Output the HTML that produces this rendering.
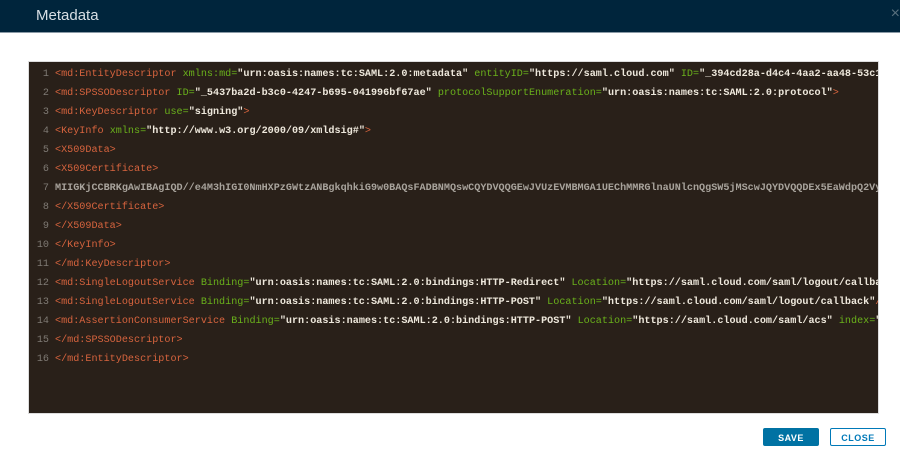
<!DOCTYPE html>
<html><head><meta charset="utf-8"><style>
body{margin:0;width:900px;height:451px;background:#fff;overflow:hidden;font-family:"Liberation Sans",sans-serif;position:relative}
.hdr{position:absolute;left:0;top:0;width:900px;height:32px;background:#00253c;border-bottom:1px solid #8a9aa6}
.hdr span{position:absolute;left:36px;top:7px;color:#d8dfe5;font-size:15px}
.x{position:absolute;right:0;top:5px;color:#58707e;font-size:16px}
.code{position:absolute;left:28px;top:61px;width:851px;height:353px;background:#292019;overflow:hidden;border:1px solid #ddd;box-sizing:border-box}
.l{position:absolute;left:0;height:19px;line-height:19px;font-family:"Liberation Mono",monospace;font-size:10.15px;white-space:pre;color:#ebe6da}
.v{font-weight:bold;color:#eee8dc}
.n{display:inline-block;width:20px;text-align:right;color:#7f7a74;margin-right:6px}
.t{color:#d8643e}.a{color:#6ab11b}.g{color:#a8a39c;font-weight:bold}
.btn{position:absolute;top:428px;height:18px;width:56px;font-size:9px;font-weight:bold;text-align:center;line-height:18px;letter-spacing:.5px;border-radius:2px;box-sizing:border-box}
</style></head><body>
<div class="hdr"><span>Metadata</span></div><div class="x">×</div>
<div class="code">
<div class="l" style="top:3px"><span class="n">1</span><span class="t">&lt;md:EntityDescriptor</span> <span class="a">xmlns:md=</span><span class="v">"urn:oasis:names:tc:SAML:2.0:metadata"</span> <span class="a">entityID=</span><span class="v">"https://saml.cloud.com"</span> <span class="a">ID=</span><span class="v">"_394cd28a-d4c4-4aa2-aa48-53c1234567</span></div>
<div class="l" style="top:22px"><span class="n">2</span><span class="t">&lt;md:SPSSODescriptor</span> <span class="a">ID=</span><span class="v">"_5437ba2d-b3c0-4247-b695-041996bf67ae"</span> <span class="a">protocolSupportEnumeration=</span><span class="v">"urn:oasis:names:tc:SAML:2.0:protocol"</span><span class="t">&gt;</span></div>
<div class="l" style="top:41px"><span class="n">3</span><span class="t">&lt;md:KeyDescriptor</span> <span class="a">use=</span><span class="v">"signing"</span><span class="t">&gt;</span></div>
<div class="l" style="top:60px"><span class="n">4</span><span class="t">&lt;KeyInfo</span> <span class="a">xmlns=</span><span class="v">"http://www.w3.org/2000/09/xmldsig#"</span><span class="t">&gt;</span></div>
<div class="l" style="top:79px"><span class="n">5</span><span class="t">&lt;X509Data&gt;</span></div>
<div class="l" style="top:98px"><span class="n">6</span><span class="t">&lt;X509Certificate&gt;</span></div>
<div class="l" style="top:117px"><span class="n">7</span><span class="g">MIIGKjCCBRKgAwIBAgIQD//e4M3hIGI0NmHXPzGWtzANBgkqhkiG9w0BAQsFADBNMQswCQYDVQQGEwJVUzEVMBMGA1UEChMMRGlnaUNlcnQgSW5jMScwJQYDVQQDEx5EaWdpQ2VydCBTSEEy</span></div>
<div class="l" style="top:136px"><span class="n">8</span><span class="t">&lt;/X509Certificate&gt;</span></div>
<div class="l" style="top:155px"><span class="n">9</span><span class="t">&lt;/X509Data&gt;</span></div>
<div class="l" style="top:174px"><span class="n">10</span><span class="t">&lt;/KeyInfo&gt;</span></div>
<div class="l" style="top:193px"><span class="n">11</span><span class="t">&lt;/md:KeyDescriptor&gt;</span></div>
<div class="l" style="top:212px"><span class="n">12</span><span class="t">&lt;md:SingleLogoutService</span> <span class="a">Binding=</span><span class="v">"urn:oasis:names:tc:SAML:2.0:bindings:HTTP-Redirect"</span> <span class="a">Location=</span><span class="v">"https://saml.cloud.com/saml/logout/callback"</span><span class="t">/&gt;</span></div>
<div class="l" style="top:231px"><span class="n">13</span><span class="t">&lt;md:SingleLogoutService</span> <span class="a">Binding=</span><span class="v">"urn:oasis:names:tc:SAML:2.0:bindings:HTTP-POST"</span> <span class="a">Location=</span><span class="v">"https://saml.cloud.com/saml/logout/callback"</span><span class="t">/&gt;</span></div>
<div class="l" style="top:250px"><span class="n">14</span><span class="t">&lt;md:AssertionConsumerService</span> <span class="a">Binding=</span><span class="v">"urn:oasis:names:tc:SAML:2.0:bindings:HTTP-POST"</span> <span class="a">Location=</span><span class="v">"https://saml.cloud.com/saml/acs"</span> <span class="a">index=</span><span class="v">"0"</span></div>
<div class="l" style="top:269px"><span class="n">15</span><span class="t">&lt;/md:SPSSODescriptor&gt;</span></div>
<div class="l" style="top:288px"><span class="n">16</span><span class="t">&lt;/md:EntityDescriptor&gt;</span></div>
</div>
<div class="btn" style="left:763px;background:#0072a3;color:#fff;border:1px solid #0072a3">SAVE</div>
<div class="btn" style="left:830px;background:#fff;color:#0079b8;border:1px solid #0079b8">CLOSE</div>
</body></html>
